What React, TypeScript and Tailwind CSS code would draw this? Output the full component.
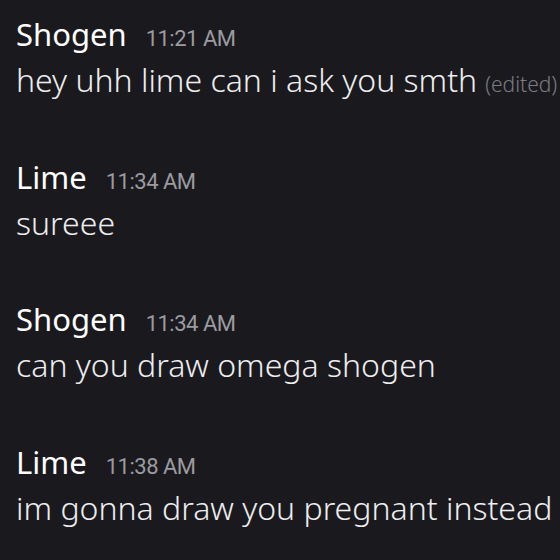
const messages = [
  { name: "Shogen", time: "11:21 AM", text: "hey uhh lime can i ask you smth", edited: true },
  { name: "Lime", time: "11:34 AM", text: "sureee" },
  { name: "Shogen", time: "11:34 AM", text: "can you draw omega shogen" },
  { name: "Lime", time: "11:38 AM", text: "im gonna draw you pregnant instead" },
]

export default function App() {
  return (
    <div className="w-[560px] h-[560px] overflow-hidden bg-[#1a1a1e] pl-[16px] pt-[11px] font-['Noto_Sans',sans-serif] whitespace-nowrap">
      {messages.map((m, i) => (
        <div key={i} className="h-[142.5px]">
          <div className="flex items-baseline h-[46px]">
            <span className="text-[31px] font-normal text-white leading-[46px]">{m.name}</span>
            <span className="ml-[19px] text-[22px] text-[#9b9ba0] font-['Roboto',sans-serif] tracking-[-0.5px]">{m.time}</span>
          </div>
          <div className="text-[32px] font-light text-[#ededf0] leading-[46px]">
            {m.text}
            {m.edited && <span className="ml-[8px] text-[21px] text-[#7c7c82]">(edited)</span>}
          </div>
        </div>
      ))}
    </div>
  )
}
